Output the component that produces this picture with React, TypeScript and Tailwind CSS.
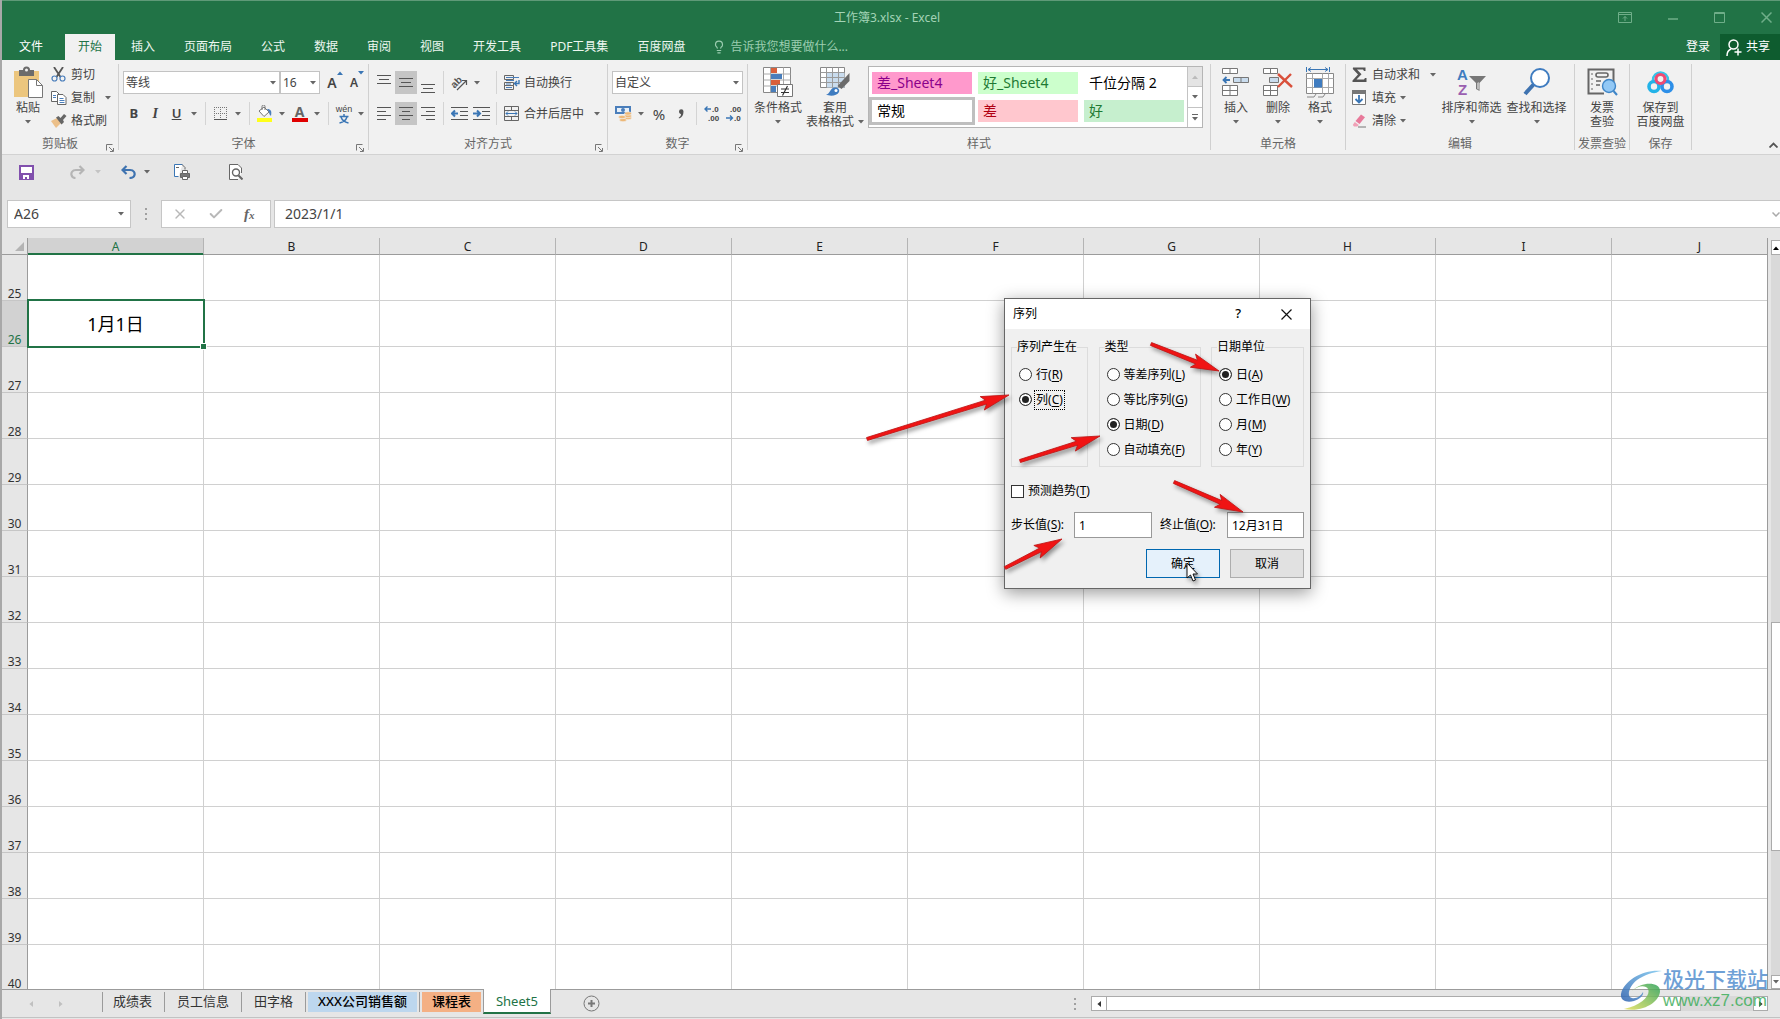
import React from 'react'
import { Check, Lightbulb, X } from 'lucide-react'

const TABS = ['插入', '页面布局', '公式', '数据', '审阅', '视图', '开发工具', 'PDF工具集', '百度网盘']
const COLUMNS = ['A', 'B', 'C', 'D', 'E', 'F', 'G', 'H', 'I', 'J']
const ROWS = Array.from({ length: 16 }, (_, i) => 25 + i)

/* ---------- small shared pieces ---------- */

function Caret({ className = 'text-[#666]' }: { className?: string }) {
  return (
    <svg width="6" height="4" viewBox="0 0 6 4" className={`shrink-0 ${className}`} aria-hidden="true">
      <path d="M0 0h6L3 3.6z" fill="currentColor" />
    </svg>
  )
}

function CaretButton({ label }: { label: string }) {
  return (
    <button aria-label={label} className="w-3.5 h-[23px] flex items-center justify-center">
      <Caret />
    </button>
  )
}

function Tool({ label, active, children }: { label: string; active?: boolean; children: React.ReactNode }) {
  return (
    <button
      aria-label={label}
      className={`w-[22px] h-[23px] flex items-center justify-center ${active ? 'bg-[#c5c5c5]' : ''}`}
    >
      {children}
    </button>
  )
}

function Sep() {
  return <div className="w-px h-[23px] mx-1 bg-[#d4d4d4]" />
}

function Group({ title, launcher, width, children }: {
  title: string
  launcher?: boolean
  width: string
  children: React.ReactNode
}) {
  return (
    <>
      <section className={`shrink-0 flex flex-col justify-between ${width}`}>
        {children}
        <div className="relative pb-0.5 text-center leading-4 text-[#666]">
          {title}
          {launcher && (
            <button aria-label={`${title}设置`} className="absolute right-1 bottom-0.5">
              <svg width="8" height="8" viewBox="0 0 8 8" fill="none" stroke="#777">
                <path d="M.5 6.500v-6h6M3 3l4 4M7.500 4v3.500H4" />
              </svg>
            </button>
          )}
        </div>
      </section>
      <div className="shrink-0 w-px my-1 bg-[#d0d0d0]" />
    </>
  )
}

function BigButton({ icon, lines, caret, width }: {
  icon: React.ReactNode
  lines: string[]
  caret?: 'below' | 'inline'
  width: string
}) {
  return (
    <button className={`shrink-0 flex flex-col items-center pt-1.5 leading-[14px] whitespace-nowrap ${width}`}>
      <span className="h-8 mb-[3px] flex items-center justify-center">{icon}</span>
      {lines.map((line, i) => (
        <span key={line} className="flex items-center gap-1">
          {line}
          {caret === 'inline' && i === lines.length - 1 && <Caret />}
        </span>
      ))}
      {caret === 'below' && (
        <span className="h-3.5 flex items-center">
          <Caret />
        </span>
      )}
    </button>
  )
}

function SmallButton({ icon, text, caret, wide }: { icon: React.ReactNode; text: string; caret?: boolean; wide?: boolean }) {
  return (
    <button className="h-[23px] flex items-center whitespace-nowrap">
      <span className="w-5 flex items-center">{icon}</span>
      {text}
      {caret && (
        <span className={wide ? 'ml-2.5' : 'ml-1'}>
          <Caret />
        </span>
      )}
    </button>
  )
}

function Lines({ rows, y = 0 }: { rows: [number, number][]; y?: number }) {
  return (
    <svg width="14" height="20" viewBox="0 0 14 20" stroke="#555" aria-hidden="true">
      {rows.map(([a, b], i) => (
        <path key={i} d={`M${a} ${y + i * 4 + 0.5}H${b}`} />
      ))}
    </svg>
  )
}

/* ---------- icons ---------- */

const PasteIcon = () => (
  <svg width="30" height="32" viewBox="0 0 30 32">
    <path d="M1 5h25v26H1z" fill="#ecc67e" />
    <path d="M6 4h4a3.500 3.500 0 0 1 7 0h4v6H6z" fill="#6b6b6b" />
    <circle cx="13.500" cy="4" r="1.500" fill="#f1f1f1" />
    <path d="M15.500 13.500h8l6 6v12h-14z" fill="#fff" stroke="#777" />
    <path d="M23.500 13.500v6h6" fill="none" stroke="#777" />
  </svg>
)

const ScissorsIcon = () => (
  <svg width="15" height="15" viewBox="0 0 15 15" fill="none">
    <path d="M3 0l6.500 10M12 0L5.500 10" stroke="#555" strokeWidth="1.800" />
    <circle cx="3.500" cy="11.500" r="2.500" stroke="#4a7ebb" strokeWidth="1.200" />
    <circle cx="11.500" cy="11.500" r="2.500" stroke="#4a7ebb" strokeWidth="1.200" />
  </svg>
)

const CopyIcon = () => (
  <svg width="16" height="14" viewBox="0 0 16 14" fill="#fff" stroke="#666">
    <path d="M.5.5h5l2.500 2.500v7.500H.5z" />
    <path d="M2 4.500h3M2 6.500h3" stroke="#4a7ebb" />
    <path d="M6.500 3.500h5.500l3 3v7h-8.500z" />
    <path d="M8.500 7.500h4M8.500 9.500h5M8.500 11.500h5" stroke="#4a7ebb" />
  </svg>
)

const BrushIcon = () => (
  <svg width="16" height="14" viewBox="0 0 16 14">
    <path d="M0 7l6-3 4 5-5 5z" fill="#ecc08a" />
    <path d="M5 3.500l2.500-1.500 2 2L13 0l2.500 2L12 6l1 2-2.500 2.500z" fill="#666" />
  </svg>
)

const BorderIcon = () => (
  <svg width="14" height="14" viewBox="0 0 14 14" stroke="#777" fill="none">
    <path d="M.5 0v12M6.500 0v12M12.500 0v12M0 .5h13M0 6.500h13" strokeDasharray="1 1" />
    <path d="M0 12.500h13" stroke="#555" />
  </svg>
)

const FillIcon = () => (
  <svg width="17" height="17" viewBox="0 0 17 17">
    <path d="M3 6l5-4 5 5-5 4.500z" fill="#fff" stroke="#777" />
    <path d="M6 5V1.500a1.500 1.500 0 0 1 3 0V5" fill="none" stroke="#777" />
    <path d="M11 4c4 0 5 2 4 7-1-1-2-2-2-4z" fill="#4a7ebb" />
    <path d="M1 13h15v4H1z" fill="#ffff1a" />
  </svg>
)

const FontColorIcon = () => (
  <span className="flex flex-col items-center">
    <span className="text-sm leading-3 font-bold text-[#666]">A</span>
    <span className="w-4 h-1 bg-[#e00000]" />
  </span>
)

const OrientationIcon = () => (
  <svg width="20" height="20" viewBox="0 0 20 20" className="font-['Liberation_Sans']">
    <text x="2" y="13" fontSize="10" fontWeight="700" fill="#555" transform="rotate(-45 7 10)">ab</text>
    <path d="M8 17l9-9M17.500 12V7.500H13" fill="none" stroke="#555" strokeWidth="1.200" />
  </svg>
)

const IndentIcon = ({ right }: { right?: boolean }) => (
  <svg width="17" height="13" viewBox="0 0 17 13" fill="none" stroke="#555">
    <path d="M0 .5h17M9 4.500h8M9 8.500h8M0 12.500h17" />
    <path d={right ? 'M0 6.500h6M4 3.500l3 3-3 3' : 'M7 6.500H1M4 3.500l-3 3 3 3'} stroke="#3a76b5" strokeWidth="2" />
  </svg>
)

const WrapIcon = () => (
  <svg width="16" height="15" viewBox="0 0 16 15" fill="none" stroke="#666">
    <path d="M.5 4.500v-4h9v4zM.5 10.500v-3h9v3zM.5 14.500v-4h9v4z" />
    <path d="M2 2.500h13M2 5.500h8M2 9h5M2 12.500h6" stroke="#4a7ebb" />
    <path d="M15 5v3.500h-4M13 6l-2.500 2.500L13 11" stroke="#3a76b5" strokeWidth="1.400" />
  </svg>
)

const MergeIcon = () => (
  <svg width="15" height="15" viewBox="0 0 15 15" fill="none" stroke="#666">
    <path d="M.5.5h14v14H.5zM.5 4.500h14M.5 10.500h14M7.500.5v4M7.500 10.500v4" />
    <path d="M2 7.500h11M4 5.500l-2 2 2 2M11 5.500l2 2-2 2" stroke="#3a76b5" />
  </svg>
)

const CurrencyIcon = () => (
  <svg width="17" height="17" viewBox="0 0 17 17">
    <path d="M0 1h16v8H0z" fill="#4a7ebb" />
    <path d="M2 3h12v4H2z" fill="#e8f0f8" />
    <circle cx="8" cy="5" r="2" fill="#4a7ebb" />
    <g fill="#edb878" stroke="#f1f1f1" strokeWidth=".6">
      <ellipse cx="13" cy="13" rx="3.500" ry="1.700" />
      <ellipse cx="13" cy="11" rx="3.500" ry="1.700" />
      <ellipse cx="13" cy="8.500" rx="3.500" ry="1.700" />
      <ellipse cx="8" cy="15" rx="3.500" ry="1.700" />
      <ellipse cx="7" cy="12" rx="3.500" ry="1.700" />
    </g>
  </svg>
)

const DecimalIcon = ({ less }: { less?: boolean }) => (
  <svg width="16" height="20" viewBox="0 0 16 20" fontSize="8" fontWeight="700" className="font-['Liberation_Sans']">
    <text x={less ? 4 : 8} y="8" fill="#444">{less ? '.00' : '.0'}</text>
    <text x={less ? 8 : 4} y="17" fill="#444">{less ? '.0' : '.00'}</text>
    <path
      d={less ? 'M0 14h6M4 11.500l2.500 2.500L4 16.500' : 'M7 5H1M3.500 2.500L1 5l2.500 2.500'}
      fill="none"
      stroke="#3a76b5"
      strokeWidth="1.400"
    />
  </svg>
)

const ConditionalIcon = () => (
  <svg width="30" height="31" viewBox="0 0 30 31">
    <path d="M.5.5h27v25H.5z" fill="#fff" stroke="#888" />
    <path d="M.5 7h27M.5 13h27M.5 19h27M7.500.5v25M20.500.5v25" stroke="#aaa" fill="none" />
    <path d="M8 1h6v5H8zM8 13h9v5H8z" fill="#d9603b" />
    <path d="M8 7h11v5H8zM8 19h5v6H8z" fill="#4a7ebb" />
    <path d="M14.500 17.500h15v12h-15z" fill="#fff" stroke="#777" />
    <path d="M18 22h8M18 25.500h8M24.500 19l-5 9.500" stroke="#333" strokeWidth="1.200" />
  </svg>
)

const TableFormatIcon = () => (
  <svg width="30" height="30" viewBox="0 0 30 30">
    <path d="M.5.5h24v20H.5z" fill="#fff" stroke="#888" />
    <path d="M7 6h17.500v14.500H7z" fill="#c9dcee" />
    <path d="M.5 5.500h24M.5 10.500h24M.5 15.500h24M6.500.5v20M12.500.5v20M18.500.5v20" stroke="#9a9a9a" fill="none" />
    <path d="M29.500 6v8l-8 8-4-3z" fill="#6b6b6b" />
    <path d="M6 27.500c4 0 4-7 9-7 3 0 5 2 4 4.500-2 4-9 4.500-13 2.500z" fill="#3f7cc0" />
    <circle cx="16" cy="23.500" r="1.500" fill="#fff" />
  </svg>
)

const InsertCellsIcon = () => (
  <svg width="28" height="28" viewBox="0 0 28 28" fill="#fff" stroke="#777">
    <path d="M.5.5h15v5H.5zM8 .5v5M.5 17.500h15v10H.5zM8 17.500v10M.5 22.500h15" />
    <path d="M11.500 9.500h15v5h-15zM19 9.500v5" fill="#c9dcee" />
    <path d="M8 12H2M4.500 9L1.500 12l3 3" fill="none" stroke="#3a76b5" strokeWidth="1.800" />
  </svg>
)

const DeleteCellsIcon = () => (
  <svg width="30" height="28" viewBox="0 0 30 28" fill="#fff" stroke="#777">
    <path d="M.5.5h14v5H.5zM7.500.5v5M.5 17.500h14v10H.5zM7.500 17.500v10M.5 22.500h14" />
    <path d="M6.500 9.500h9v5h-9z" fill="#c9dcee" />
    <path d="M15 6l14 13M28 6L15 19" stroke="#d9503b" strokeWidth="2.400" />
  </svg>
)

const FormatCellsIcon = () => (
  <svg width="29" height="31" viewBox="0 0 29 31" fill="#fff" stroke="#888">
    <path d="M.5 6.500h27v20H.5z" />
    <path d="M.5 11.500h27M.5 20.500h27M6.500 6.500v20M16.500 6.500v20M22.500 6.500v20" fill="none" stroke="#aaa" />
    <path d="M8 12h8v8.500H8z" fill="#3f7cc0" stroke="none" />
    <path d="M1 30h7l2-3M12 30h5l2-3" fill="none" />
    <path d="M.5 0v5M23.500 0v5M2 2.500h20M5 .5l-3 2 3 2M19 .5l3 2-3 2" fill="none" stroke="#3a76b5" />
  </svg>
)

const SigmaIcon = () => (
  <svg width="15" height="15" viewBox="0 0 15 15">
    <path d="M1 .5h12.500V4H12L11 2.500H5l4.500 4.800L4.500 12.500H12L13 11h1.500v4H.5v-1.500L6 7.500.8 2z" fill="#555" />
  </svg>
)

const FillDownIcon = () => (
  <svg width="14" height="15" viewBox="0 0 14 15">
    <path d="M.5.5h13v14H.5z" fill="#fff" stroke="#777" />
    <path d="M0 0h14v4H0z" fill="#777" />
    <path d="M7 5v7.500M3.500 9L7 12.500 10.500 9" fill="none" stroke="#3a76b5" strokeWidth="1.800" />
  </svg>
)

const EraserIcon = () => (
  <svg width="15" height="14" viewBox="0 0 15 14">
    <path d="M3.500 7L9 .5l4 2.800L7.500 10z" fill="#e8799a" />
    <path d="M2.800 8l4 3-1.500 1.500L2 12.500.8 11z" fill="#f0a0b6" />
    <path d="M6 13h8" stroke="#777" />
  </svg>
)

const SortFilterIcon = () => (
  <svg width="29" height="32" viewBox="0 0 29 32" fontSize="15" fontWeight="700" className="font-['Liberation_Sans']">
    <text x="0" y="14" fill="#3f7cc0">A</text>
    <text x="1" y="29" fill="#9a5fb0">Z</text>
    <path d="M12 10h17l-6.500 7v8l-3.500-2v-6z" fill="#777" />
    <path d="M20.500 17v6l1 .6V16z" fill="#fff" />
  </svg>
)

const FindIcon = () => (
  <svg width="28" height="28" viewBox="0 0 28 28" fill="none">
    <path d="M2 26l9-10" stroke="#3f73b0" strokeWidth="4" />
    <circle cx="17" cy="10" r="9" fill="#fff" stroke="#3f7cc0" strokeWidth="2" />
  </svg>
)

const InvoiceIcon = () => (
  <svg width="31" height="28" viewBox="0 0 31 28" fill="none">
    <path d="M17 25.500H1.500V1.500h25V14" stroke="#666" strokeWidth="2" />
    <path d="M5 5v18" stroke="#666" strokeDasharray="2 3" />
    <rect x="9" y="5" width="12" height="4" rx="2" stroke="#666" strokeWidth="1.600" />
    <path d="M9 13h5M9 17h4" stroke="#666" strokeWidth="1.600" />
    <circle cx="22" cy="18" r="6.500" fill="#92c8f5" stroke="#3f86c8" strokeWidth="1.400" />
    <path d="M26.500 23l3.500 4" stroke="#3f86c8" strokeWidth="2" />
  </svg>
)

const NetdiskIcon = () => (
  <svg width="27" height="24" viewBox="0 0 27 24" fill="none" strokeWidth="3.600">
    <path d="M6 10a7.500 7.500 0 0 1 15 0" stroke="#35c3e8" strokeWidth="2.500" />
    <circle cx="7" cy="16.500" r="5" stroke="#22b3e8" />
    <circle cx="20" cy="16.500" r="5" stroke="#2d8fe8" />
    <circle cx="13.500" cy="9" r="4.500" stroke="#ef4a72" strokeWidth="3.200" />
  </svg>
)

const SaveIcon = () => (
  <svg width="15" height="15" viewBox="0 0 15 15">
    <path d="M1 1h13v13H1z" fill="#fff" stroke="#8150ad" strokeWidth="2" />
    <path d="M1 8h13v6H1z" fill="#8150ad" />
    <path d="M4 10h6v4H4z" fill="#fff" />
    <path d="M6 12h2v2H6z" fill="#8150ad" />
  </svg>
)

const UndoIcon = ({ flip, color }: { flip?: boolean; color: string }) => (
  <svg width="15" height="14" viewBox="0 0 15 14" fill="none" stroke={color} strokeWidth="2.200">
    <path
      d={
        flip
          ? 'M13 5H6C2 5 1 8 1.500 10c.5 2 2 3 4 3M9.500 1L13.500 5l-4 4'
          : 'M2 5h7c4 0 5 3 4.500 5-.5 2-2 3-5 3M5.500 1L1.500 5l4 4'
      }
    />
  </svg>
)

const QuickPrintIcon = () => (
  <svg width="17" height="16" viewBox="0 0 17 16" fill="#fff" stroke="#666">
    <path d="M8.500.5H.5v12h4" stroke="#3a76b5" />
    <path d="M8 .5l3 3v2M2 3.500h3" fill="none" />
    <path d="M6.500 9.500h9v4h-9z" fill="#777" />
    <path d="M8.500 6.500h5v3h-5zM8.500 12.500h5v3h-5z" />
  </svg>
)

const PreviewIcon = () => (
  <svg width="14" height="16" viewBox="0 0 14 16" fill="none" stroke="#666">
    <path d="M12.500 9V4L9 .5H.5v15H9" fill="#fff" />
    <circle cx="7" cy="8.500" r="3.500" strokeWidth="1.400" />
    <path d="M9.500 11.500l4 4" strokeWidth="2" />
  </svg>
)

/* ---------- window chrome ---------- */

function TitleBar() {
  return (
    <header className="bg-[#217346] border-t border-[#5f9a78] text-white">
      <div className="h-[33px] flex items-center">
        <div className="flex-1" />
        <h1 className="text-[#a3d3b6]">工作簿3.xlsx - Excel</h1>
        <div className="flex-1 flex justify-end items-center gap-9 pr-2 text-[#6fae89]">
          <button aria-label="功能区显示选项">
            <svg width="14" height="11" viewBox="0 0 14 11" fill="none" stroke="currentColor">
              <path d="M.5.5h13v10H.5zM.5 2.500h13M7 9V4.500M5 6.500l2-2 2 2" />
            </svg>
          </button>
          <button aria-label="最小化">
            <svg width="10" height="11" viewBox="0 0 10 11" stroke="currentColor">
              <path d="M0 7h10" strokeWidth="1.500" />
            </svg>
          </button>
          <button aria-label="最大化">
            <svg width="11" height="11" viewBox="0 0 11 11" fill="none" stroke="currentColor">
              <path d="M.5.5h10v10H.5zM.5 1.500h10" />
            </svg>
          </button>
          <button aria-label="关闭">
            <svg width="11" height="11" viewBox="0 0 11 11" stroke="currentColor" strokeWidth="1.500">
              <path d="M.5.5l10 10M10.500.5l-10 10" />
            </svg>
          </button>
        </div>
      </div>
      <nav className="h-[26px] flex items-stretch whitespace-nowrap">
        <button className="w-[58px]">文件</button>
        <div className="flex gap-[3px] pl-[5px]">
          <button className="px-[13px] bg-[#f1f1f1] text-[#217346]">开始</button>
          {TABS.map((tab) => (
            <button key={tab} className="px-[13px] text-[#eef7f1]">{tab}</button>
          ))}
        </div>
        <label className="flex-1 flex items-center gap-1 pl-3.5 text-[#9bcdb0]">
          <Lightbulb className="w-3.5 h-3.5" />
          <input
            placeholder="告诉我您想要做什么..."
            className="w-40 bg-transparent outline-none placeholder:text-[#9bcdb0]"
          />
        </label>
        <button className="px-2.5">登录</button>
        <button className="flex items-center gap-1 pl-1.5 pr-2.5 bg-[#0e5c2f]">
          <svg width="16" height="17" viewBox="0 0 16 17" fill="none" stroke="currentColor" strokeWidth="1.500">
            <circle cx="7.500" cy="5.500" r="4.500" />
            <path d="M1 17c0-4 1.500-6 4-7M12 9.500v7M8.500 13h7" />
          </svg>
          共享
        </button>
      </nav>
    </header>
  )
}

function RibbonSelect({ label, value, width }: { label: string; value: string; width: string }) {
  return (
    <div className={`relative h-[23px] ${width}`}>
      <select
        aria-label={label}
        className="w-full h-full appearance-none bg-white border border-[#c3c3c3] pl-0.5 pr-4 outline-none"
      >
        <option>{value}</option>
      </select>
      <span className="absolute right-1 inset-y-0 flex items-center pointer-events-none">
        <Caret />
      </span>
    </div>
  )
}

function StyleGallery() {
  return (
    <div className="w-[335px] h-[62px] mt-1.5 ml-[3px] flex bg-white border border-[#b5b5b5]">
      <div className="flex-1 grid grid-cols-[100px_100px_100px] grid-rows-[22px_22px] gap-1.5 pt-[5px] pl-[3px] text-sm leading-[22px]">
        <button className="pl-[5px] text-left bg-[#ff99cc] text-[#8b008b]">差_Sheet4</button>
        <button className="pl-[5px] text-left bg-[#ccffcc] text-[#1e7a33]">好_Sheet4</button>
        <button className="pl-[5px] text-left text-black">千位分隔 2</button>
        <button className="pl-[5px] text-left text-black ring-[3px] ring-[#bfbfbf]">常规</button>
        <button className="pl-[5px] text-left bg-[#ffc7ce] text-[#b00012]">差</button>
        <button className="pl-[5px] text-left bg-[#c6efce] text-[#1e7a33]">好</button>
      </div>
      <div className="w-[15px] flex flex-col border-l border-[#c3c3c3] divide-y divide-[#c3c3c3]">
        <button aria-label="上一行" className="flex-1 flex items-center justify-center bg-[#e4e4e4]">
          <Caret className="rotate-180 text-[#bbb]" />
        </button>
        <button aria-label="下一行" className="flex-1 flex items-center justify-center">
          <Caret />
        </button>
        <button aria-label="其他" className="flex-1 flex flex-col gap-0.5 items-center justify-center">
          <span className="w-1.5 h-px bg-[#666]" />
          <Caret />
        </button>
      </div>
    </div>
  )
}

function Ribbon() {
  return (
    <div className="relative h-[95px] flex bg-[#f1f1f1] border-b border-[#d2d2d2] text-[#444] overflow-hidden">
      <Group title="剪贴板" launcher width="w-[116px]">
        <div className="flex pl-1">
          <BigButton icon={<PasteIcon />} lines={['粘贴']} caret="below" width="w-[44px]" />
          <div className="pt-[3px] pl-px">
            <SmallButton icon={<ScissorsIcon />} text="剪切" />
            <SmallButton icon={<CopyIcon />} text="复制" caret wide />
            <SmallButton icon={<BrushIcon />} text="格式刷" />
          </div>
        </div>
      </Group>

      <Group title="字体" launcher width="w-[249px]">
        <div className="flex flex-col gap-2 pt-[11px] pl-1">
          <div className="flex">
            <RibbonSelect label="字体" value="等线" width="w-[157px]" />
            <RibbonSelect label="字号" value="16" width="w-10" />
            <div className="flex pl-1">
              <Tool label="增大字号">
                <span className="text-sm font-semibold">A</span>
                <Caret className="rotate-180 self-start text-[#3a76b5]" />
              </Tool>
              <Tool label="减小字号">
                <span className="text-xs font-semibold">A</span>
                <Caret className="self-start text-[#3a76b5]" />
              </Tool>
            </div>
          </div>
          <div className="flex">
            <Tool label="加粗"><b className="text-[13px]">B</b></Tool>
            <Tool label="倾斜"><i className="font-['Liberation_Serif'] font-bold text-sm">I</i></Tool>
            <Tool label="下划线"><span className="text-[13px] font-semibold underline">U</span></Tool>
            <CaretButton label="下划线样式" />
            <Sep />
            <Tool label="边框"><BorderIcon /></Tool>
            <CaretButton label="边框样式" />
            <Sep />
            <Tool label="填充颜色"><FillIcon /></Tool>
            <CaretButton label="更多填充颜色" />
            <Tool label="字体颜色"><FontColorIcon /></Tool>
            <CaretButton label="更多字体颜色" />
            <Sep />
            <Tool label="拼音">
              <svg width="20" height="23" viewBox="0 0 20 23" textAnchor="middle">
                <text x="10" y="10" fontSize="9" fill="#444" className="font-['Liberation_Sans']">wén</text>
                <path d="M10 12v2M5.500 14.500h9M7 15c1 3 3 5 7.500 6M13 15c-1 3-3 5-7.500 6" fill="none" stroke="#3a76b5" strokeWidth="1.500" />
              </svg>
            </Tool>
            <CaretButton label="拼音设置" />
          </div>
        </div>
      </Group>

      <Group title="对齐方式" launcher width="w-[238px]">
        <div className="flex flex-col gap-2 pt-[11px] pl-1">
          <div className="flex">
            <Tool label="顶端对齐"><Lines rows={[[0, 14], [2, 12], [0, 14]]} y={2} /></Tool>
            <Tool label="垂直居中" active><Lines rows={[[0, 14], [2, 12], [0, 14]]} y={5} /></Tool>
            <Tool label="底端对齐"><Lines rows={[[0, 14], [2, 12], [0, 14]]} y={11} /></Tool>
            <Sep />
            <div className="w-[44px] flex">
              <Tool label="方向"><OrientationIcon /></Tool>
              <CaretButton label="方向选项" />
            </div>
            <Sep />
            <div className="pl-[3px]">
              <SmallButton icon={<WrapIcon />} text="自动换行" />
            </div>
          </div>
          <div className="flex">
            <Tool label="左对齐"><Lines rows={[[0, 14], [0, 9], [0, 14], [0, 9]]} y={3} /></Tool>
            <Tool label="居中" active><Lines rows={[[0, 14], [3, 11], [0, 14], [3, 11]]} y={3} /></Tool>
            <Tool label="右对齐"><Lines rows={[[0, 14], [5, 14], [0, 14], [5, 14]]} y={3} /></Tool>
            <Sep />
            <Tool label="减少缩进量"><IndentIcon /></Tool>
            <Tool label="增加缩进量"><IndentIcon right /></Tool>
            <Sep />
            <div className="pl-[3px]">
              <SmallButton icon={<MergeIcon />} text="合并后居中" caret wide />
            </div>
          </div>
        </div>
      </Group>

      <Group title="数字" launcher width="w-[139px]">
        <div className="flex flex-col gap-2 pt-[11px] pl-1">
          <RibbonSelect label="数字格式" value="自定义" width="w-[131px]" />
          <div className="flex">
            <Tool label="会计数字格式"><CurrencyIcon /></Tool>
            <CaretButton label="货币选项" />
            <Tool label="百分比样式"><span className="text-[15px]">%</span></Tool>
            <Tool label="千位分隔样式">
              <svg width="6" height="10" viewBox="0 0 6 10">
                <path d="M1 2.500a2.200 2.200 0 0 1 4.500 0C5.500 6 4 8.500 1 9.500l-.3-.8C2.500 7.500 3 6.500 3 5 1.800 5 1 4 1 2.500z" fill="#555" />
              </svg>
            </Tool>
            <Sep />
            <Tool label="增加小数位数"><DecimalIcon /></Tool>
            <Tool label="减少小数位数"><DecimalIcon less /></Tool>
          </div>
        </div>
      </Group>

      <Group title="样式" width="w-[462px]">
        <div className="flex pl-[3px]">
          <BigButton icon={<ConditionalIcon />} lines={['条件格式']} caret="below" width="w-[54px]" />
          <BigButton icon={<TableFormatIcon />} lines={['套用', '表格格式']} caret="inline" width="w-[60px]" />
          <StyleGallery />
        </div>
      </Group>

      <Group title="单元格" width="w-[134px]">
        <div className="flex pl-1">
          <BigButton icon={<InsertCellsIcon />} lines={['插入']} caret="below" width="w-[42px]" />
          <BigButton icon={<DeleteCellsIcon />} lines={['删除']} caret="below" width="w-[42px]" />
          <BigButton icon={<FormatCellsIcon />} lines={['格式']} caret="below" width="w-[42px]" />
        </div>
      </Group>

      <Group title="编辑" width="w-[228px]">
        <div className="flex pl-1.5">
          <div className="w-[87px] pt-[3px]">
            <SmallButton icon={<SigmaIcon />} text="自动求和" caret wide />
            <SmallButton icon={<FillDownIcon />} text="填充" caret />
            <SmallButton icon={<EraserIcon />} text="清除" caret />
          </div>
          <BigButton icon={<SortFilterIcon />} lines={['排序和筛选']} caret="below" width="w-[65px]" />
          <BigButton icon={<FindIcon />} lines={['查找和选择']} caret="below" width="w-[65px]" />
        </div>
      </Group>

      <Group title="发票查验" width="w-[54px]">
        <BigButton icon={<InvoiceIcon />} lines={['发票', '查验']} width="w-full" />
      </Group>

      <Group title="保存" width="w-[61px]">
        <BigButton icon={<NetdiskIcon />} lines={['保存到', '百度网盘']} width="w-full" />
      </Group>

      <button aria-label="折叠功能区" className="ml-auto self-end pb-1.5 pr-0.5">
        <svg width="9" height="6" viewBox="0 0 9 6" fill="none" stroke="#555" strokeWidth="1.800">
          <path d="M.5 5.500l4-4 4 4" />
        </svg>
      </button>
    </div>
  )
}

function QuickAccess() {
  return (
    <div className="h-[45px] pb-[11px] flex items-center pl-[17px]">
      <button aria-label="保存" className="mr-9"><SaveIcon /></button>
      <button aria-label="恢复" className="flex items-center gap-2.5">
        <UndoIcon flip color="#b5b5b5" />
        <Caret className="text-[#c4c4c4]" />
      </button>
      <button aria-label="撤消" className="ml-5 flex items-center gap-2">
        <UndoIcon color="#3f73b0" />
        <Caret />
      </button>
      <button aria-label="快速打印" className="ml-6"><QuickPrintIcon /></button>
      <button aria-label="打印预览" className="ml-[38px]"><PreviewIcon /></button>
    </div>
  )
}

function Dots() {
  return (
    <svg width="2" height="12" viewBox="0 0 2 12" fill="#a0a0a0" aria-hidden="true">
      <path d="M0 0h2v2H0zM0 5h2v2H0zM0 10h2v2H0z" />
    </svg>
  )
}

function FormulaBar() {
  return (
    <div className="h-[28px] flex pl-[5px] text-sm text-[#444]">
      <div className="w-[124px] flex items-center bg-white border border-[#c6c6c6]">
        <input aria-label="名称框" defaultValue="A26" className="min-w-0 flex-1 pl-1.5 outline-none" />
        <button aria-label="名称列表" className="px-1.5">
          <Caret />
        </button>
      </div>
      <div className="w-[30px] flex items-center justify-center"><Dots /></div>
      <div className="w-[110px] flex items-center gap-5 pl-2.5 bg-white border border-[#c6c6c6]">
        <button aria-label="取消输入"><X className="w-4 h-4 text-[#b8b8b8]" /></button>
        <button aria-label="确认输入"><Check className="w-4 h-4 text-[#b8b8b8]" strokeWidth={3} /></button>
        <button aria-label="插入函数" className="font-['Liberation_Serif'] italic font-bold text-[15px] leading-4 text-[#666]">
          f<span className="text-[11px]">x</span>
        </button>
      </div>
      <div className="flex-1 flex items-center ml-[3px] bg-white border border-r-0 border-[#c6c6c6]">
        <input aria-label="编辑栏" defaultValue="2023/1/1" className="flex-1 pl-2.5 outline-none" />
        <button aria-label="展开编辑栏">
          <svg width="8" height="5" viewBox="0 0 8 5" fill="none" stroke="#aaa" strokeWidth="1.500">
            <path d="M.5.5L4 4 7.500.5" />
          </svg>
        </button>
      </div>
    </div>
  )
}

/* ---------- sheet ---------- */

function Sheet() {
  return (
    <div className="flex-1 min-w-0 overflow-hidden border-r border-[#9b9b9b]">
      <table className="w-[1786px] table-fixed border-separate border-spacing-0 bg-white">
        <thead>
          <tr className="h-[17px] bg-[#e6e6e6] text-[#222] leading-[14px]">
            <th className="w-[26px] border-r border-b border-[#9b9b9b] p-0">
              <svg width="9" height="9" viewBox="0 0 9 9" className="ml-auto mr-[3px]">
                <path d="M9 0v9H0z" fill="#b4b4b4" />
              </svg>
            </th>
            {COLUMNS.map((col) => (
              <th
                key={col}
                className={`w-[176px] p-0 pt-0.5 font-normal border-r border-b border-r-[#b4b4b4] ${
                  col === 'A'
                    ? 'bg-[#d2d2d2] text-[#217346] border-b-[#217346] shadow-[inset_0_-1px_0_#217346]'
                    : 'border-b-[#9b9b9b]'
                }`}
              >
                {col}
              </th>
            ))}
          </tr>
        </thead>
        <tbody>
          {ROWS.map((row) => (
            <tr key={row} className="h-[46px]">
              <th
                className={`p-0 align-bottom font-normal leading-3 border-r border-b border-r-[#9b9b9b] border-b-[#c6c6c6] ${
                  row === 26 ? 'bg-[#d2d2d2] text-[#217346]' : 'bg-[#e6e6e6] text-[#333]'
                }`}
              >
                {row}
              </th>
              {COLUMNS.map((col) =>
                row === 26 && col === 'A' ? (
                  <td key={col} className="relative p-0 text-center text-lg leading-5 text-black border-r border-b border-[#d0d0d0]">
                    1月1日
                    <div className="absolute -top-0.5 -left-px -right-0.5 -bottom-0.5 border-2 border-[#217346]" />
                    <div className="absolute -right-1 -bottom-1 w-[7px] h-[7px] bg-[#217346] border border-white" />
                  </td>
                ) : (
                  <td key={col} className="p-0 border-r border-b border-[#d0d0d0]" />
                ),
              )}
            </tr>
          ))}
        </tbody>
      </table>
    </div>
  )
}

function VerticalScroll() {
  return (
    <div className="w-3 flex flex-col pl-[3px] pt-0.5">
      <button aria-label="向上滚动" className="h-[15px] flex items-center justify-center bg-white border border-r-0 border-[#ababab]">
        <Caret className="rotate-180" />
      </button>
      <div className="flex-1 flex flex-col bg-[#d9d9d9]">
        <div className="flex-[369]" />
        <div className="flex-[228] bg-white border border-r-0 border-[#ababab]" />
        <div className="flex-[125]" />
      </div>
      <button aria-label="向下滚动" className="h-[14px] flex items-center justify-center bg-white border border-r-0 border-[#ababab]">
        <Caret />
      </button>
    </div>
  )
}

function SheetTabs() {
  return (
    <footer className="h-[30px] bg-[#e6e6e6] border-t border-[#9b9b9b] text-[13px] text-[#333]">
      <div className="h-[28px] flex border-b border-[#c2c2c2]">
        <div className="w-[100px] flex items-center gap-6 pl-[26px] text-[#c0c0c0]">
          <button aria-label="上一张工作表"><Caret className="rotate-90" /></button>
          <button aria-label="下一张工作表"><Caret className="-rotate-90" /></button>
        </div>
        <div className="h-6 flex items-center whitespace-nowrap">
          <button className="h-5 pl-2.5 pr-3 border-l border-[#9b9b9b]">成绩表</button>
          <button className="h-5 pl-3 pr-3 border-l border-[#9b9b9b]">员工信息</button>
          <button className="h-5 pl-3 pr-3 border-l border-[#9b9b9b]">田字格</button>
          <div className="h-5 px-0.5 border-x border-[#9b9b9b]">
            <button className="h-full px-2.5 bg-[#bdd7ee] text-black font-medium">XXX公司销售额</button>
          </div>
          <div className="h-5 px-0.5">
            <button className="h-full px-2.5 bg-[#f4b084] text-black font-medium">课程表</button>
          </div>
        </div>
        <button className="h-[23px] -mt-px px-3 box-content bg-white border-x border-[#9b9b9b] border-b-2 border-b-[#217346] text-[#217346] leading-6">
          Sheet5
        </button>
        <button aria-label="新工作表" className="ml-8">
          <svg width="17" height="17" viewBox="0 0 17 17" fill="none" stroke="#777">
            <circle cx="8.500" cy="8.500" r="7.500" />
            <path d="M8.500 5v7M5 8.500h7" strokeWidth="2" />
          </svg>
        </button>
        <div className="ml-auto w-[706px] flex items-center pr-3">
          <Dots />
          <div className="flex-1 h-[15px] ml-[15px] flex bg-[#d9d9d9]">
            <button aria-label="向左滚动" className="w-4 flex items-center justify-center bg-white border border-[#ababab]">
              <Caret className="rotate-90" />
            </button>
            <div className="w-[574px] bg-white border border-l-0 border-[#ababab]" />
            <button aria-label="向右滚动" className="w-[15px] ml-auto flex items-center justify-center bg-white border border-[#ababab]">
              <Caret className="-rotate-90" />
            </button>
          </div>
        </div>
      </div>
    </footer>
  )
}

/* ---------- series dialog ---------- */

function Mnemonic({ text, k }: { text: string; k: string }) {
  return (
    <>
      {text}(<u className="underline-offset-2">{k}</u>)
    </>
  )
}

function RadioGroup({ name, title, options, checked, focused }: {
  name: string
  title: string
  options: [string, string][]
  checked: string
  focused?: boolean
}) {
  return (
    <fieldset className="h-32 px-[5px] border border-[#dcdcdc]">
      <legend className="leading-4">{title}</legend>
      <div className="pt-[7px] pl-0.5 whitespace-nowrap">
        {options.map(([text, k]) => (
          <label key={k} className="h-[25px] flex items-center gap-1">
            <input
              type="radio"
              name={name}
              defaultChecked={k === checked}
              className="shrink-0 appearance-none w-[13px] h-[13px] rounded-full border border-[#333] bg-white checked:bg-[#222] checked:shadow-[inset_0_0_0_2px_white]"
            />
            <span className={focused && k === checked ? 'outline-1 outline-dotted outline-black outline-offset-1' : ''}>
              <Mnemonic text={text} k={k} />
            </span>
          </label>
        ))}
      </div>
    </fieldset>
  )
}

function Arrow({ from, to }: { from: [number, number]; to: [number, number] }) {
  const dx = to[0] - from[0]
  const dy = to[1] - from[1]
  const len = Math.hypot(dx, dy)
  const angle = (Math.atan2(dy, dx) * 180) / Math.PI
  return (
    <path
      transform={`translate(${from[0]} ${from[1]}) rotate(${angle})`}
      d={`M0 -1.500L${len - 24} -2L${len - 28} -7L${len} 0L${len - 28} 7L${len - 24} 2L0 1.500Z`}
      fill="#f01414"
      stroke="#c01818"
      strokeWidth=".8"
    />
  )
}

function SeriesDialog() {
  return (
    <div
      role="dialog"
      aria-label="序列"
      className="absolute left-[1002px] top-[298px] w-[307px] bg-[#f0f0f0] border border-[#666] text-black shadow-[0_4px_16px_rgba(0,0,0,0.4)]"
    >
      <div className="h-[30px] flex items-center pl-2 pr-[18px] bg-white">
        <h2 className="flex-1">序列</h2>
        <button aria-label="帮助" className="mr-10 text-[13px] font-medium">?</button>
        <button aria-label="关闭">
          <svg width="11" height="11" viewBox="0 0 11 11" stroke="#111" strokeWidth="1.200">
            <path d="M.5.5l10 10M10.500.5l-10 10" />
          </svg>
        </button>
      </div>

      <form className="px-1.5 py-2.5" onSubmit={(e) => e.preventDefault()}>
        <div className="grid grid-cols-[77px_102px_93px] justify-between">
          <RadioGroup name="in" title="序列产生在" options={[['行', 'R'], ['列', 'C']]} checked="C" focused />
          <RadioGroup
            name="type"
            title="类型"
            options={[['等差序列', 'L'], ['等比序列', 'G'], ['日期', 'D'], ['自动填充', 'F']]}
            checked="D"
          />
          <RadioGroup
            name="unit"
            title="日期单位"
            options={[['日', 'A'], ['工作日', 'W'], ['月', 'M'], ['年', 'Y']]}
            checked="A"
          />
        </div>

        <label className="mt-4 h-4 flex items-center gap-1">
          <input type="checkbox" className="appearance-none w-[13px] h-[13px] border border-[#333] bg-white" />
          <span><Mnemonic text="预测趋势" k="T" /></span>
        </label>

        <div className="mt-[13px] h-[26px] flex items-center whitespace-nowrap">
          <label htmlFor="step" className="w-[63px]"><Mnemonic text="步长值" k="S" />:</label>
          <input id="step" defaultValue="1" className="w-[78px] h-full pl-1 bg-white border border-[#999] outline-none" />
          <label htmlFor="stop" className="w-[67px] ml-2"><Mnemonic text="终止值" k="O" />:</label>
          <input id="stop" defaultValue="12月31日" className="min-w-0 flex-1 h-full pl-1 bg-white border border-[#999] outline-none" />
        </div>

        <div className="mt-[11px] flex justify-end gap-2.5">
          <button className="w-[74px] h-[29px] bg-[#e5f1fb] border border-[#0067b0]">确定</button>
          <button className="w-[74px] h-[29px] bg-[#e1e1e1] border border-[#adadad]">取消</button>
        </div>
      </form>

      {/* pointers and mouse cursor over the dialog */}
      <svg
        className="absolute -top-px -left-px w-[307px] h-[291px] overflow-visible pointer-events-none drop-shadow-[2px_3px_2px_rgba(0,0,0,0.4)]"
        viewBox="0 0 307 291"
      >
        <Arrow from={[-137, 141]} to={[5, 97]} />
        <Arrow from={[16, 163]} to={[96, 138]} />
        <Arrow from={[147, 46]} to={[215, 73]} />
        <Arrow from={[170, 184]} to={[239, 214]} />
        <Arrow from={[1, 270]} to={[58, 241]} />
        <path d="M183 265v15l3.500-3 2.500 6 2.500-1-2.500-6h4.500z" fill="#fff" stroke="#111" />
      </svg>
    </div>
  )
}

function Watermark() {
  return (
    <div className="absolute right-3 bottom-2 flex items-end opacity-85 pointer-events-none">
      <svg width="43" height="41" viewBox="0 0 43 41">
        <defs>
          <linearGradient id="wmBlue" x1="1" y1="0" x2="0" y2="1">
            <stop offset="0" stopColor="#7cc8f0" />
            <stop offset="1" stopColor="#2f62b0" />
          </linearGradient>
          <linearGradient id="wmGreen" x1="1" y1="0" x2="0" y2="1">
            <stop offset="0" stopColor="#2fa35a" />
            <stop offset="1" stopColor="#e6e05a" />
          </linearGradient>
        </defs>
        <path d="M42 1C24-1 4 10 1 24c-1 7 6 9 13 7 6-2 10-6 9-9-2 4-7 7-11 6-6-1-3-12 5-18C24 5 33 2 42 1z" fill="url(#wmBlue)" />
        <path d="M12 21c6-6 14-6 16-2 3 6-6 16-24 20 20 4 36-8 36-18 0-9-18-10-28 0z" fill="url(#wmGreen)" />
      </svg>
      <div className="flex flex-col items-start leading-[21px] whitespace-nowrap">
        <span className="text-[21px] font-medium text-[#5590d0]">极光下载站</span>
        <span className="font-['Liberation_Sans'] text-[17px] text-[#3fae5c]">www.xz7.com</span>
      </div>
    </div>
  )
}

export default function App() {
  return (
    <div className="relative h-screen min-h-[600px] flex flex-col overflow-hidden border-l-2 border-[#a8a8a8] bg-[#e6e6e6] font-['Noto_Sans','Noto_Sans_CJK_SC',sans-serif] text-xs">
      <TitleBar />
      <Ribbon />
      <QuickAccess />
      <FormulaBar />
      <main className="flex-1 min-h-0 flex pt-2.5">
        <Sheet />
        <VerticalScroll />
      </main>
      <SheetTabs />
      <SeriesDialog />
      <Watermark />
    </div>
  )
}
